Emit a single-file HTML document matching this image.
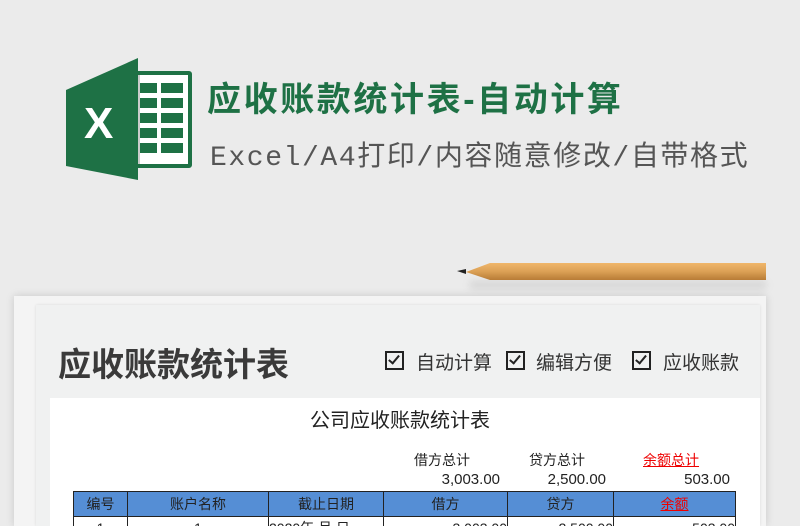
<!DOCTYPE html>
<html style="overflow:hidden;height:526px"><head><meta charset="utf-8"><style>
body{margin:0;width:800px;height:526px;overflow:hidden;background:#ebebeb;font-family:"Liberation Sans","Noto Sans CJK SC",sans-serif;position:relative}
.a{position:absolute}
.t1{left:207px;top:72px;font-size:34px;font-weight:bold;color:#1e7145;letter-spacing:2.6px;white-space:nowrap}
.t2{left:210px;top:134px;font-size:28px;color:#555;letter-spacing:1.6px;white-space:nowrap;font-family:"Liberation Mono","Noto Sans CJK SC",monospace}
td{border:1px solid #222;text-align:center;font-size:14px;color:#222;padding:0}
.cb{position:absolute;top:351px;width:15px;height:15px;border:2px solid #222}
.cb:after{content:"";position:absolute;left:4px;top:0px;width:4px;height:9px;border-right:2px solid #222;border-bottom:2px solid #222;transform:rotate(40deg)}
.ct{position:absolute;top:348px;font-size:19px;color:#333;white-space:nowrap}
</style></head><body>
<svg class="a" style="left:66px;top:58px" width="128" height="122" viewBox="0 0 128 122">
<rect x="60" y="13" width="66" height="97" rx="3" fill="#1e7145"/>
<rect x="64" y="17" width="58" height="89" fill="#fff"/>
<g fill="#1e7145">
<rect x="73" y="25" width="18" height="10"/><rect x="95" y="25" width="22" height="10"/>
<rect x="73" y="40" width="18" height="10"/><rect x="95" y="40" width="22" height="10"/>
<rect x="73" y="55" width="18" height="10"/><rect x="95" y="55" width="22" height="10"/>
<rect x="73" y="70" width="18" height="10"/><rect x="95" y="70" width="22" height="10"/>
<rect x="73" y="85" width="18" height="10"/><rect x="95" y="85" width="22" height="10"/>
</g>
<rect x="64" y="17" width="10" height="89" fill="#ccc"/>
<path d="M0 32 L72 0 L72 122 L0 108 Z" fill="#1e7145"/>
<text x="18" y="80" font-size="44" font-weight="bold" fill="#fff" font-family="Liberation Sans">X</text>
</svg>
<div class="a t1">应收账款统计表-自动计算</div>
<div class="a t2">Excel/A4打印/内容随意修改/自带格式</div>
<div class="a" style="left:14px;top:296px;width:752px;height:230px;background:#f4f4f4;box-shadow:0 0 8px rgba(0,0,0,.15)"></div>
<div class="a" style="left:36px;top:305px;width:724px;height:221px;background:#f0f1f1;box-shadow:0 0 3px rgba(0,0,0,.1)"></div>
<div class="a" style="left:50px;top:398px;width:710px;height:128px;background:#fff"></div>
<div class="a" style="left:470px;top:282px;width:296px;height:6px;background:rgba(0,0,0,.12);filter:blur(4px)"></div>
<svg class="a" style="left:456px;top:260px" width="312" height="24">
<defs><linearGradient id="w" x1="0" y1="0" x2="0" y2="1"><stop offset="0" stop-color="#f0b66a"/><stop offset=".5" stop-color="#dba055"/><stop offset="1" stop-color="#b87c36"/></linearGradient></defs>
<path d="M34 3 L310 3 L310 20 L34 20 L10 12 Z" fill="url(#w)"/>
<path d="M1 11 L10 9 L10 14 Z" fill="#222"/>
</svg>
<div class="a" style="left:58px;top:338px;font-size:33px;font-weight:bold;color:#3a3a3a;white-space:nowrap">应收账款统计表</div>
<span class="cb" style="left:385px"></span><span class="ct" style="left:416px">自动计算</span>
<span class="cb" style="left:506px"></span><span class="ct" style="left:536px">编辑方便</span>
<span class="cb" style="left:632px"></span><span class="ct" style="left:663px">应收账款</span>
<div class="a" style="left:310px;top:404px;font-size:20px;color:#222">公司应收账款统计表</div>
<div class="a" style="left:414px;top:450px;font-size:14px;color:#222">借方总计</div>
<div class="a" style="left:529px;top:450px;font-size:14px;color:#222">贷方总计</div>
<div class="a" style="left:643px;top:450px;font-size:14px;color:#e00;text-decoration:underline">余额总计</div>
<div class="a" style="left:400px;top:471px;width:100px;text-align:right;font-size:15px;color:#222">3,003.00</div>
<div class="a" style="left:506px;top:471px;width:100px;text-align:right;font-size:15px;color:#222">2,500.00</div>
<div class="a" style="left:630px;top:471px;width:100px;text-align:right;font-size:15px;color:#222">503.00</div>
<table class="a" style="left:73px;top:491px;border-collapse:collapse;width:663px">
<tr style="height:25px;background:#558ed5"><td style="width:53px">编号</td><td style="width:140px">账户名称</td><td style="width:114px">截止日期</td><td style="width:123px">借方</td><td style="width:105px">贷方</td><td style="color:#e00;text-decoration:underline">余额</td></tr>
<tr style="height:22px"><td>1</td><td>1</td><td style="text-align:left">2020年 月 日</td><td style="text-align:right">3,003.00</td><td style="text-align:right">2,500.00</td><td style="text-align:right">503.00</td></tr>
</table>
</body></html>
